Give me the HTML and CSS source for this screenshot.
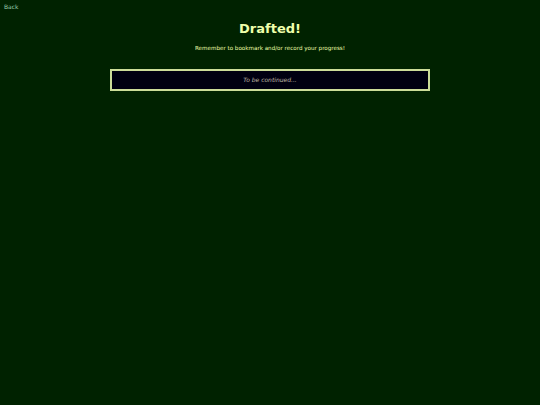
FILE: index.html
```html
<!DOCTYPE html>
<html>
<head>
<meta charset="utf-8">
<link rel="stylesheet" href="styles.css">
</head>
<body>
<a class="back" href="#">Back</a>
<main class="page">
  <h1 class="title">Drafted!</h1>
  <p class="note">Remember to bookmark and/or record your progress!</p>
  <div class="box">To be continued...</div>
</main>
</body>
</html>
```
FILE: styles.css
```css
html, body {
  margin: 0;
  padding: 0;
  background: #002200;
  height: 100%;
}
body {
  font-family: "DejaVu Sans", Verdana, sans-serif;
  color: #eeffaa;
}
.back {
  display: block;
  padding: 3px 0 0 4px;
  font-size: 6px;
  line-height: 7px;
  color: #99ccaa;
  text-decoration: none;
}
.page {
  display: flex;
  flex-direction: column;
  align-items: center;
}
.title {
  margin: 11px 0 0;
  font-size: 13px;
  line-height: 16px;
  font-weight: bold;
  color: #eeffaa;
}
.note {
  margin: 7px 0 0;
  font-size: 5.6px;
  line-height: 8px;
  color: #eeffaa;
}
.box {
  margin-top: 17px;
  box-sizing: border-box;
  width: 320px;
  height: 22px;
  border: 2px solid #ccdd99;
  background: #000011;
  color: #c0bca8;
  font-style: italic;
  font-size: 6px;
  line-height: 18px;
  text-align: center;
}
```
